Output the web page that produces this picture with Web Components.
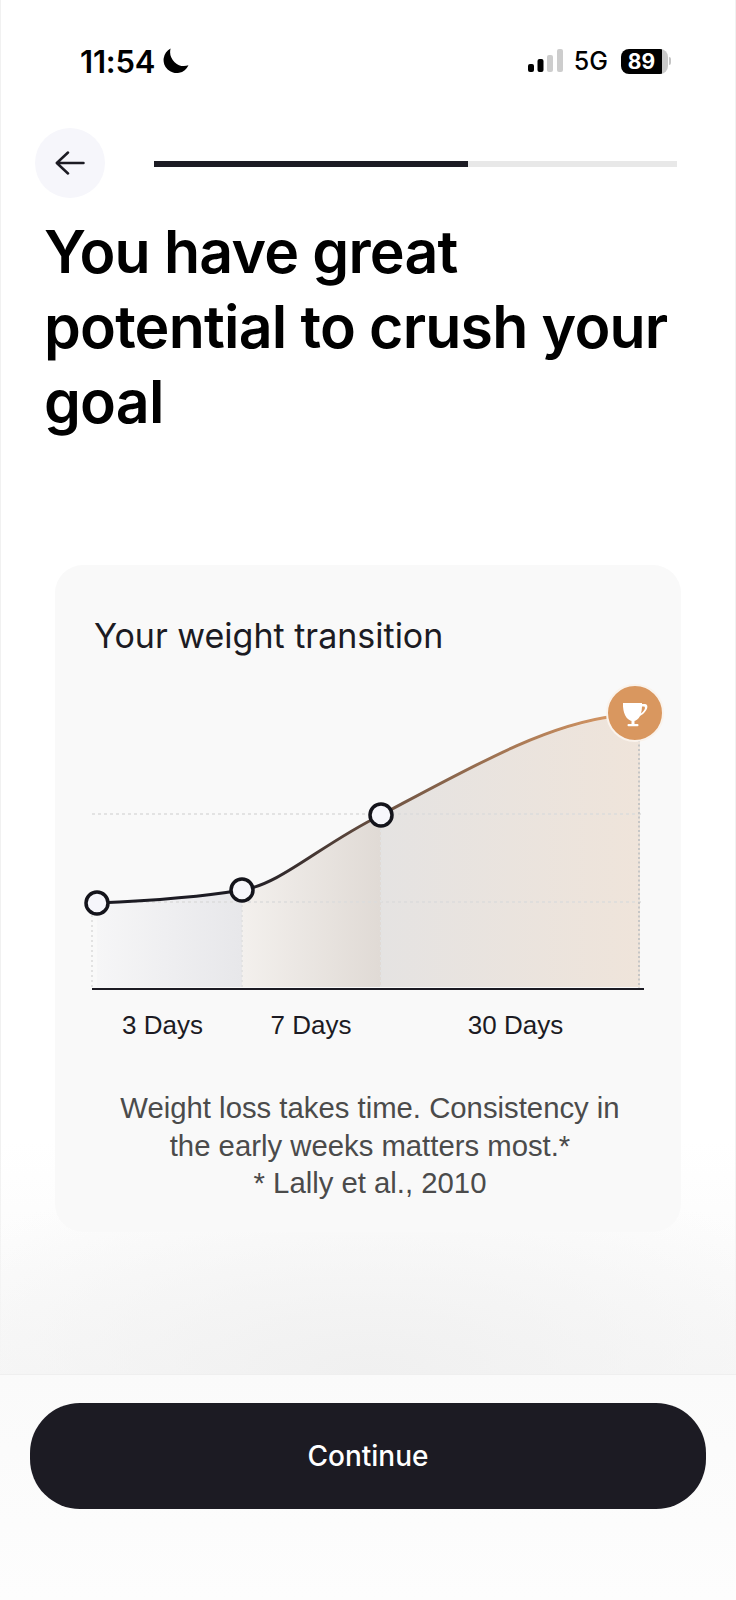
<!DOCTYPE html>
<html lang="en">
<head>
<meta charset="utf-8">
<title>Weight transition</title>
<style>
  html, body { margin: 0; padding: 0; background: #fff; }
  body { font-family: Inter, "Liberation Sans", sans-serif; color: #000; }
</style>
</head>
<body>
<onboarding-screen>
  <status-bar slot="status" time="11:54" battery="89"></status-bar>
  <top-nav slot="nav" progress="60"></top-nav>
  <span slot="title">You have great<br>potential to crush your<br>goal</span>
  <weight-card slot="card">
    <span slot="title">Your weight transition</span>
    <span slot="note">Weight loss takes time. Consistency in<br>the early weeks matters most.*<br>* Lally et al., 2010</span>
  </weight-card>
  <continue-button slot="action">Continue</continue-button>
</onboarding-screen>

<script>
// Whole page: column with the header parts, the card and a pinned footer
class OnboardingScreen extends HTMLElement {
  constructor() {
    super();
    this.attachShadow({ mode: "open" }).innerHTML = `
      <style>
        :host { display: flex; flex-direction: column; width: 736px; height: 1600px; overflow: hidden; box-shadow: inset 1px 0 #f1f1f1, inset -1px 0 #f1f1f1; }
        h1 {
          margin: 16px 0 0; padding-left: 44px;
          font: 600 59px/75px Inter, "Liberation Sans", sans-serif;
          letter-spacing: -0.8px; color: #000;
        }
        .card { display: block; margin: 126px 55px 0 55px; position: relative; z-index: 1; }
        .spacer {
          flex: 1; margin-top: -90px;
          background:
            radial-gradient(ellipse 72% 90% at 50% 100%, #f0f0f0 0, rgba(240,240,240,0) 100%),
            linear-gradient(to bottom, rgba(248,248,248,0) 0, #f8f8f8 100%);
        }
        footer {
          height: 226px; box-sizing: border-box; padding: 28px 30px 0;
          border-top: 1px solid #efefef;
          background: linear-gradient(to bottom, #fafafa, #fdfdfd);
        }
      </style>
      <slot name="status"></slot>
      <slot name="nav"></slot>
      <h1><slot name="title"></slot></h1>
      <div class="card"><slot name="card"></slot></div>
      <div class="spacer"></div>
      <footer><slot name="action"></slot></footer>
    `;
  }
}

class StatusBar extends HTMLElement {
  constructor() {
    super();
    const time = this.getAttribute("time");
    const battery = this.getAttribute("battery");
    this.attachShadow({ mode: "open" }).innerHTML = `
      <style>
        :host {
          display: flex; align-items: center; justify-content: space-between;
          height: 122px; box-sizing: border-box; padding: 0 65px 0 80px;
          font-family: Inter, "Liberation Sans", sans-serif; color: #000;
        }
        .left, .right { display: flex; align-items: center; }
        .time { font-size: 31px; font-weight: 600; letter-spacing: -0.2px; }
        .left svg { margin-left: 8px; }
        .net { font-size: 25px; font-weight: 500; margin: 0 13px 0 10px; }
        .batt {
          width: 47px; height: 25px; box-sizing: border-box; border-radius: 8px; padding-right: 6px;
          background: linear-gradient(to right, #000 41px, #c9c9c9 41px);
          color: #fff; font-size: 21px; font-weight: 700; text-align: center; line-height: 25px;
        }
        .nub { width: 2px; height: 8px; background: #c4c4c4; margin-left: 1px; border-radius: 0 2px 2px 0; }
      </style>
      <div class="left">
        <span class="time">${time}</span>
        <svg width="26" height="26" viewBox="0 0 24 24"><path d="M7 .5A12 12 0 1 0 23.500 16 13 13 0 0 1 7 .5z" fill="#000"/></svg>
      </div>
      <div class="right">
        <svg width="36" height="24" viewBox="0 0 36 24">
          <rect x="0" y="15" width="6" height="8" rx="2" fill="#000"/>
          <rect x="9.500" y="10" width="6" height="13" rx="2" fill="#000"/>
          <rect x="19" y="6" width="6" height="17" rx="2" fill="#cdcdcd"/>
          <rect x="29" y="0" width="6" height="23" rx="2" fill="#cdcdcd"/>
        </svg>
        <span class="net">5G</span>
        <span class="batt">${battery}</span>
        <span class="nub"></span>
      </div>
    `;
  }
}

class TopNav extends HTMLElement {
  constructor() {
    super();
    const progress = this.getAttribute("progress");
    this.attachShadow({ mode: "open" }).innerHTML = `
      <style>
        :host { display: flex; align-items: center; gap: 49px; padding: 6px 59px 0 35px; }
        .back {
          width: 70px; height: 70px; border-radius: 50%; background: #f6f6fb;
          display: flex; align-items: center; justify-content: center; flex: none;
        }
        .track { flex: 1; height: 6px; margin-top: 2px; background: #e8e8e8; }
        .fill { height: 100%; background: #1c1b23; width: ${progress}%; }
      </style>
      <div class="back">
        <svg width="30" height="24" viewBox="0 0 30 24" fill="none" stroke="#1c1b23" stroke-width="2.500" stroke-linecap="round" stroke-linejoin="round">
          <path d="M28.500 12H2M13 1.500 1.800 12 13 22.500"/>
        </svg>
      </div>
      <div class="track"><div class="fill"></div></div>
    `;
  }
}

// Chart coordinates are page x minus 55 and page y minus 680
class WeightChart extends HTMLElement {
  constructor() {
    super();
    this.attachShadow({ mode: "open" }).innerHTML = `
      <style>
        :host { display: block; }
        svg { display: block; }
      </style>
      <svg width="625" height="312" viewBox="0 0 625 312">
        <defs>
          <linearGradient id="fillA"><stop offset="0" stop-color="#f6f6f7"/><stop offset="1" stop-color="#e7e7ea"/></linearGradient>
          <linearGradient id="fillB"><stop offset="0" stop-color="#f3f0ed"/><stop offset="1" stop-color="#e0dad5"/></linearGradient>
          <linearGradient id="fillC"><stop offset="0" stop-color="#e5e3e2"/><stop offset="1" stop-color="#efe4da"/></linearGradient>
          <linearGradient id="lineA" gradientUnits="userSpaceOnUse" x1="187" x2="326" y1="0" y2="0">
            <stop offset="0" stop-color="#1c1b23"/><stop offset="1" stop-color="#6b5142"/>
          </linearGradient>
          <linearGradient id="lineB" gradientUnits="userSpaceOnUse" x1="326" x2="552" y1="0" y2="0">
            <stop offset="0" stop-color="#6b5142"/><stop offset="1" stop-color="#d39563"/>
          </linearGradient>
        </defs>

        <path d="M42 223C90 221 140 218 187 210V307H42Z" fill="url(#fillA)"/>
        <path d="M187 210C225 205 265 165 326 135V307H187Z" fill="url(#fillB)"/>
        <path d="M326 135C420 85 490 45 585 33V307H326Z" fill="url(#fillC)"/>

        <g stroke="#dcdcdc" stroke-width="1.500" stroke-dasharray="3 3" fill="none">
          <path d="M37 134H589M37 222H589"/>
        </g>
        <g stroke="#e2e2e2" stroke-width="2" stroke-dasharray="2 3" fill="none">
          <path d="M37 225V308M187 215V308M326 140V308"/>
        </g>
        <path d="M584 60V308" stroke="#c6c6c6" stroke-width="2" stroke-dasharray="2 2.500" fill="none"/>

        <path d="M37 309H589" stroke="#1c1b23" stroke-width="2" fill="none"/>

        <path d="M42 223C90 221 140 218 187 210" stroke="#1c1b23" stroke-width="3" fill="none"/>
        <path d="M187 210C225 205 265 165 326 135" stroke="url(#lineA)" stroke-width="3" fill="none"/>
        <path d="M326 135C420 85 490 45 560 36" stroke="url(#lineB)" stroke-width="3" fill="none"/>

        <g fill="#f6f6fb" stroke="#14141b" stroke-width="3.500">
          <circle cx="42" cy="223" r="11"/>
          <circle cx="187" cy="210" r="11"/>
          <circle cx="326" cy="135" r="11"/>
        </g>

        <circle cx="580" cy="33" r="28" fill="#d9975f" stroke="#faf3ec" stroke-width="2"/>
        <g fill="#fff">
          <path d="M568 23H587C587.500 33 584.500 41 578 41S567.500 33 568 23Z"/>
          <path d="M586 24H590C593 24 593 28 591 30.500 589.500 33 587 35 584 36.500L585 34C587 33 588.500 31 589.500 29.500 590.300 28 590 26.500 589 26.500H586Z"/>
          <rect x="576.500" y="40" width="3" height="5"/>
          <rect x="572.500" y="44" width="11" height="2.200" rx="1"/>
        </g>
      </svg>
    `;
  }
}

class WeightCard extends HTMLElement {
  constructor() {
    super();
    this.attachShadow({ mode: "open" }).innerHTML = `
      <style>
        :host {
          display: block; height: 667px; box-sizing: border-box; margin-left: 0;
          border-radius: 28px; background: #f9f9f9;
          font-family: "Liberation Sans", Arial, sans-serif;
        }
        .title {
          padding: 49px 0 0 39px; height: 115px; box-sizing: border-box;
          font-size: 34px; line-height: 44px; color: #1c1b23;
          font-family: Inter, "Liberation Sans", sans-serif;
        }
        .days { display: flex; height: 50px; margin-top: 8px; font-size: 26px; line-height: 50px; color: #1c1b23; }
        .days span { text-align: center; white-space: nowrap; }
        .note {
          margin-top: 39px; text-align: center; font-size: 29.300px; line-height: 37.500px; color: #4b4b4b; padding-left: 4px;
        }
      </style>
      <div class="title"><slot name="title"></slot></div>
      <weight-chart></weight-chart>
      <div class="days">
        <span style="width:215px">3 Days</span>
        <span style="width:82px">7 Days</span>
        <span style="width:327px">30 Days</span>
      </div>
      <div class="note"><slot name="note"></slot></div>
    `;
  }
}

class ContinueButton extends HTMLElement {
  constructor() {
    super();
    this.attachShadow({ mode: "open" }).innerHTML = `
      <style>
        :host {
          display: flex; align-items: center; justify-content: center;
          height: 106px; border-radius: 50px; background: #1c1b23; color: #fff;
          font: 500 28px Inter, "Liberation Sans", sans-serif;
        }
      </style>
      <slot></slot>
    `;
  }
}

customElements.define("onboarding-screen", OnboardingScreen);
customElements.define("status-bar", StatusBar);
customElements.define("top-nav", TopNav);
customElements.define("weight-chart", WeightChart);
customElements.define("weight-card", WeightCard);
customElements.define("continue-button", ContinueButton);
</script>
</body>
</html>
